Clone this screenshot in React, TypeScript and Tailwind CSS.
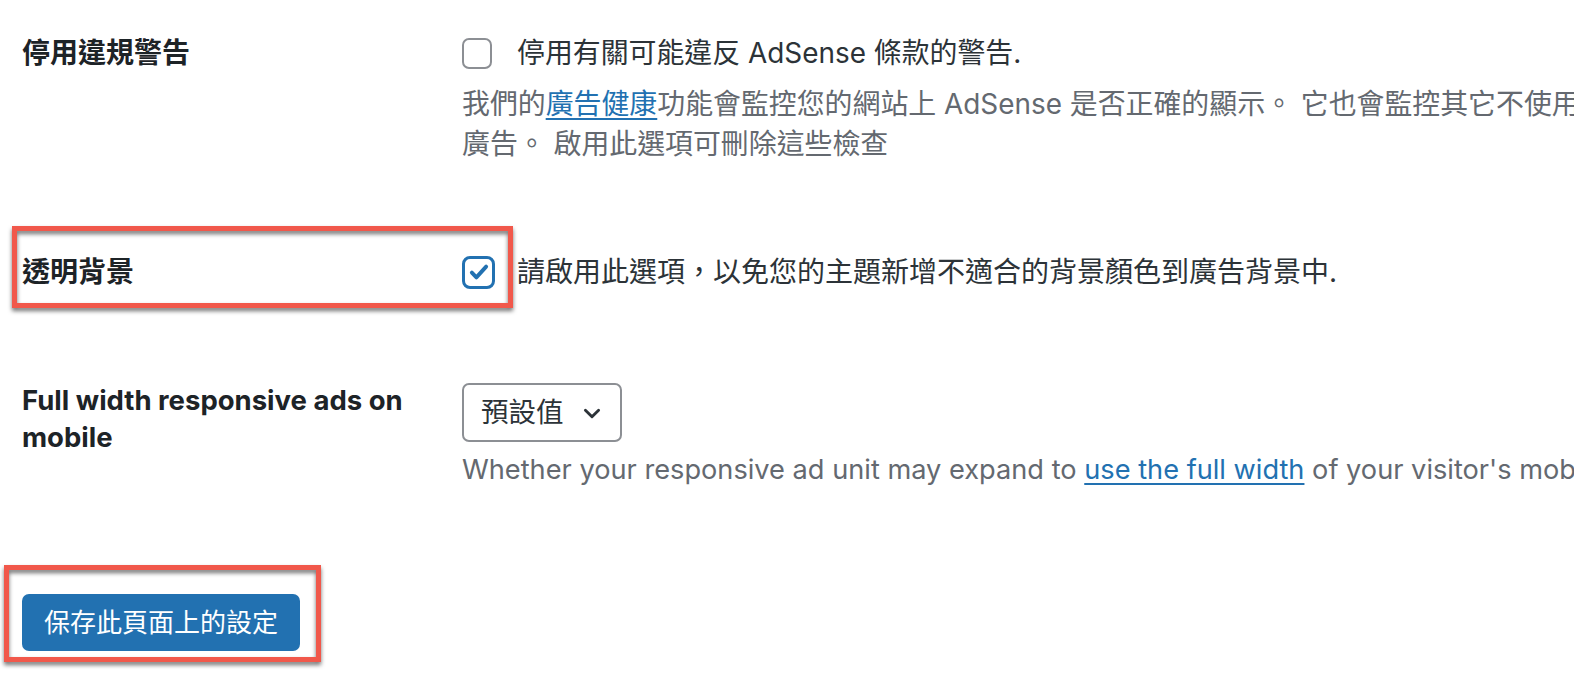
const font = 'font-[Inter,"Noto_Sans_CJK_TC",sans-serif]'

const Annotation = ({ className }: { className: string }) => (
  <div
    className={`pointer-events-none absolute border-[5px] border-[#f1584b] drop-shadow-[0_3px_2px_rgba(0,0,0,0.55)] ${className}`}
  />
)

const CheckIcon = () => (
  <svg viewBox="0 0 20 20" className="h-[26px] w-[26px]" fill="none">
    <path d="M4.5 10.5l3.5 3.6 7.5-8.2" stroke="#2271b1" strokeWidth="3" strokeLinecap="round" strokeLinejoin="round" />
  </svg>
)

const App: React.FC = () => {
  return (
    <div className={`relative h-[674px] w-[1574px] overflow-hidden bg-white ${font}`}>
      <div className="pl-[22px]">
        {/* 停用違規警告 */}
        <div className="grid grid-cols-[440px_1fr] pt-[36px]">
          <div className="text-[28px] font-bold leading-[34px] text-[#1d2327]">停用違規警告</div>
          <div>
            <div className="flex items-center">
              <span className="box-border h-[31px] w-[30px] rounded-[7px] border-2 border-[#8c8f94] bg-white" />
              <span className="ml-[25px] whitespace-nowrap text-[27.9px] leading-[34px] text-[#2c3338]">
                停用有關可能違反 AdSense 條款的警告.
              </span>
            </div>
            <p className="mt-[14px] whitespace-nowrap text-[27.9px] leading-[40px] text-[#646970]">
              我們的<a className="text-[#2271b1] underline underline-offset-[4px]">廣告健康</a>功能會監控您的網站上 AdSense 是否正確的顯示。 它也會監控其它不使用 AdSense 的
              <br />
              廣告。 啟用此選項可刪除這些檢查
            </p>
          </div>
        </div>

        {/* 透明背景 */}
        <div className="relative mt-[91px] grid grid-cols-[440px_1fr]">
          <Annotation className="left-[-10px] top-[-29px] h-[82px] w-[501px]" />
          <div className="text-[28px] font-bold leading-[34px] text-[#1d2327]">透明背景</div>
          <div className="flex items-center">
            <span className="box-border flex h-[33px] w-[33px] items-center justify-center rounded-[8px] border-[3px] border-[#2271b1] bg-white">
              <CheckIcon />
            </span>
            <span className="ml-[22px] whitespace-nowrap text-[28px] leading-[34px] text-[#2c3338]">
              請啟用此選項，以免您的主題新增不適合的背景顏色到廣告背景中.
            </span>
          </div>
        </div>

        {/* Full width responsive ads */}
        <div className="mt-[93px] grid grid-cols-[440px_1fr]">
          <div className="pr-[30px] text-[27.5px] font-bold leading-[37px] text-[#1d2327]">
            Full width responsive ads on mobile
          </div>
          <div>
            <div className="mt-[1px] flex h-[59px] w-[160px] items-center rounded-[7px] border-2 border-[#8c8f94] bg-white pl-[17px]">
              <span className="text-[27.5px] text-[#2c3338]">預設值</span>
              <svg viewBox="0 0 20 20" className="ml-[17px] h-[22px] w-[22px]" fill="none">
                <path d="M4 7.5l6 6 6-6" stroke="#2c3338" strokeWidth="2.6" strokeLinecap="round" strokeLinejoin="round" />
              </svg>
            </div>
            <p className="mt-[8px] whitespace-nowrap text-[27.2px] leading-[40px] text-[#646970]">
              Whether your responsive ad unit may expand to{' '}
              <a className="text-[#2271b1] underline underline-offset-[4px]">use the full width</a> of your visitor's mobile device screen.
            </p>
          </div>
        </div>

        {/* 保存 */}
        <div className="relative mt-[104px] w-fit">
          <Annotation className="left-[-18px] top-[-29px] h-[97px] w-[317px]" />
          <button className="h-[57px] w-[278px] rounded-[7px] bg-[#2271b1] text-[26px] text-white">
            保存此頁面上的設定
          </button>
        </div>
      </div>
    </div>
  )
}

export default App
